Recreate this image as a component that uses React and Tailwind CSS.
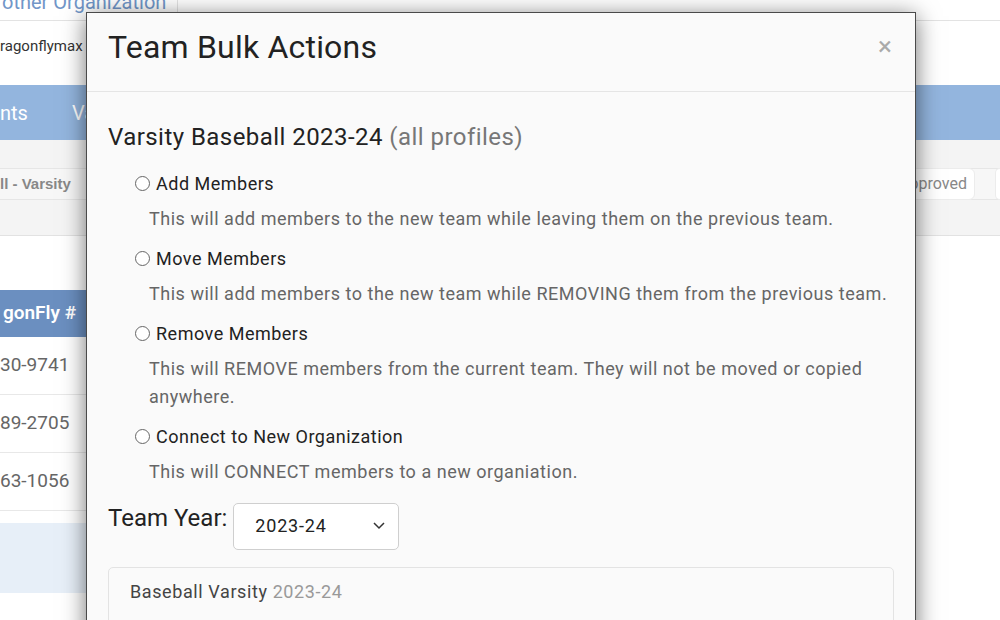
import React from "react";

const font = { fontFamily: "Roboto, 'Noto Sans', sans-serif" };

function Radio() {
  return (
    <span className="mt-[-2px] inline-block h-[15px] w-[15px] shrink-0 rounded-full border border-[#666] bg-white" />
  );
}

function Option({ label, children }) {
  return (
    <div className="flex flex-col">
      <div className="flex items-center gap-[6px] pl-[27px] text-[18px] leading-[26px] tracking-[0.5px] text-[#222]">
        <Radio />
        <span>{label}</span>
      </div>
      <div className="mt-[8px] pl-[41px] text-[18px] leading-[28px] tracking-[0.52px] text-[#666]">
        {children}
      </div>
    </div>
  );
}

export default function App() {
  return (
    <div className="relative h-[620px] w-[1000px] overflow-hidden bg-white" style={font}>
      {/* Background page */}
      <div className="flex flex-col">
        <div className="flex h-[21px] border-b border-[#e3e3e3]">
          <div className="w-[178px] overflow-hidden border-r border-[#e3e3e3]">
            <div className="-mt-[10px] pl-[2px] text-[20px] leading-[24px] text-[#7196c8]">other Organization</div>
          </div>
        </div>
        <div className="flex h-[64px] items-center text-[15px] text-[#333]">
          <span className="-mt-[14px]">ragonflymax</span>
        </div>
        <div className="flex h-[55px] items-center bg-[#93b5de] text-[20px] text-white">
          <span className="w-[72px]">nts</span>
          <span>Va</span>
        </div>
        <div className="flex h-[96px] flex-col border-b border-[#e2e2e2] bg-[#f4f4f4]">
          <div className="h-[28px]" />
          <div className="flex h-[32px] items-center justify-between border-y border-[#e6e6e6] bg-[#f7f7f7]">
            <span className="text-[15px] font-bold text-[#888]" style={{ fontFamily: "'Liberation Sans', Arial, sans-serif" }}>
              ll - Varsity
            </span>
            <div className="flex h-[32px] items-center gap-[20px]">
              <div className="flex h-[32px] items-center rounded-[6px] border border-[#ececec] bg-white pl-[8px] pr-[7px] text-[16px] text-[#888]">
                Approved
              </div>
              <div className="h-[32px] w-[5px] rounded-l-[6px] border border-r-0 border-[#ececec] bg-white" />
            </div>
          </div>
        </div>
        <div className="h-[54px]" />
        <div className="flex w-[880px] flex-col">
          <div className="flex h-[47px] items-center bg-[#6b8fc0] text-[19px] font-semibold text-white">
            <span className="w-[76px] whitespace-nowrap text-right">gonFly #</span>
          </div>
          {["30-9741", "89-2705", "63-1056"].map((n) => (
            <div key={n} className="flex h-[58px] items-center border-b border-[#e8e8e8] text-[19px] text-[#666]">
              <span>{n}</span>
            </div>
          ))}
          <div className="h-[12px]" />
          <div className="h-[70px] bg-[#e7eff8]" />
        </div>
      </div>

      {/* Modal */}
      <div className="absolute left-[86px] top-[12px] h-[700px] w-[830px] border border-[#4a4a4a] bg-[#fafafa] shadow-[0_4px_22px_rgba(0,0,0,0.55)]">
        <div className="flex h-[79px] items-start justify-between border-b border-[#e5e5e5] pl-[21px] pr-[23px] pt-[14px]">
          <h1 className="text-[32px] leading-[40px] tracking-[0.2px] text-[#222]">Team Bulk Actions</h1>
          <span className="mt-[-1px] text-[26px] leading-[40px] text-[#aaa]">×</span>
        </div>
        <div className="flex flex-col px-[21px] pt-[29px]">
          <div className="text-[24px] leading-[32px] tracking-[0.45px] text-[#222]">
            Varsity Baseball 2023-24 <span className="text-[#777]">(all profiles)</span>
          </div>
          <div className="mt-[18px] flex flex-col gap-[13px]">
            <Option label="Add Members">
              This will add members to the new team while leaving them on the previous team.
            </Option>
            <Option label="Move Members">
              This will add members to the new team while REMOVING them from the previous team.
            </Option>
            <Option label="Remove Members">
              This will REMOVE members from the current team. They will not be moved or copied anywhere.
            </Option>
            <Option label="Connect to New Organization">This will CONNECT members to a new organiation.</Option>
          </div>
          <div className="mt-[17px] flex items-start gap-[6px]">
            <span className="text-[24px] leading-[30px] text-[#222]">Team Year:</span>
            <div className="flex h-[47px] w-[166px] items-center justify-between rounded-[5px] border border-[#cfcfcf] bg-white pb-[3px] pl-[21px] pr-[12px] text-[18px] tracking-[0.8px] text-[#222]">
              <span>2023-24</span>
              <svg width="14" height="14" viewBox="0 0 14 14" fill="none" stroke="#333" strokeWidth="1.5">
                <path d="M2 5l5 5 5-5" />
              </svg>
            </div>
          </div>
          <div className="mt-[17px] h-[120px] rounded-[5px] border border-[#e3e3e3] bg-[#fafafa] pl-[21px] pt-[12px]">
            <div className="text-[18px] leading-[24px] tracking-[0.6px] text-[#444]">
              Baseball Varsity <span className="text-[#999]">2023-24</span>
            </div>
          </div>
        </div>
      </div>
    </div>
  );
}
